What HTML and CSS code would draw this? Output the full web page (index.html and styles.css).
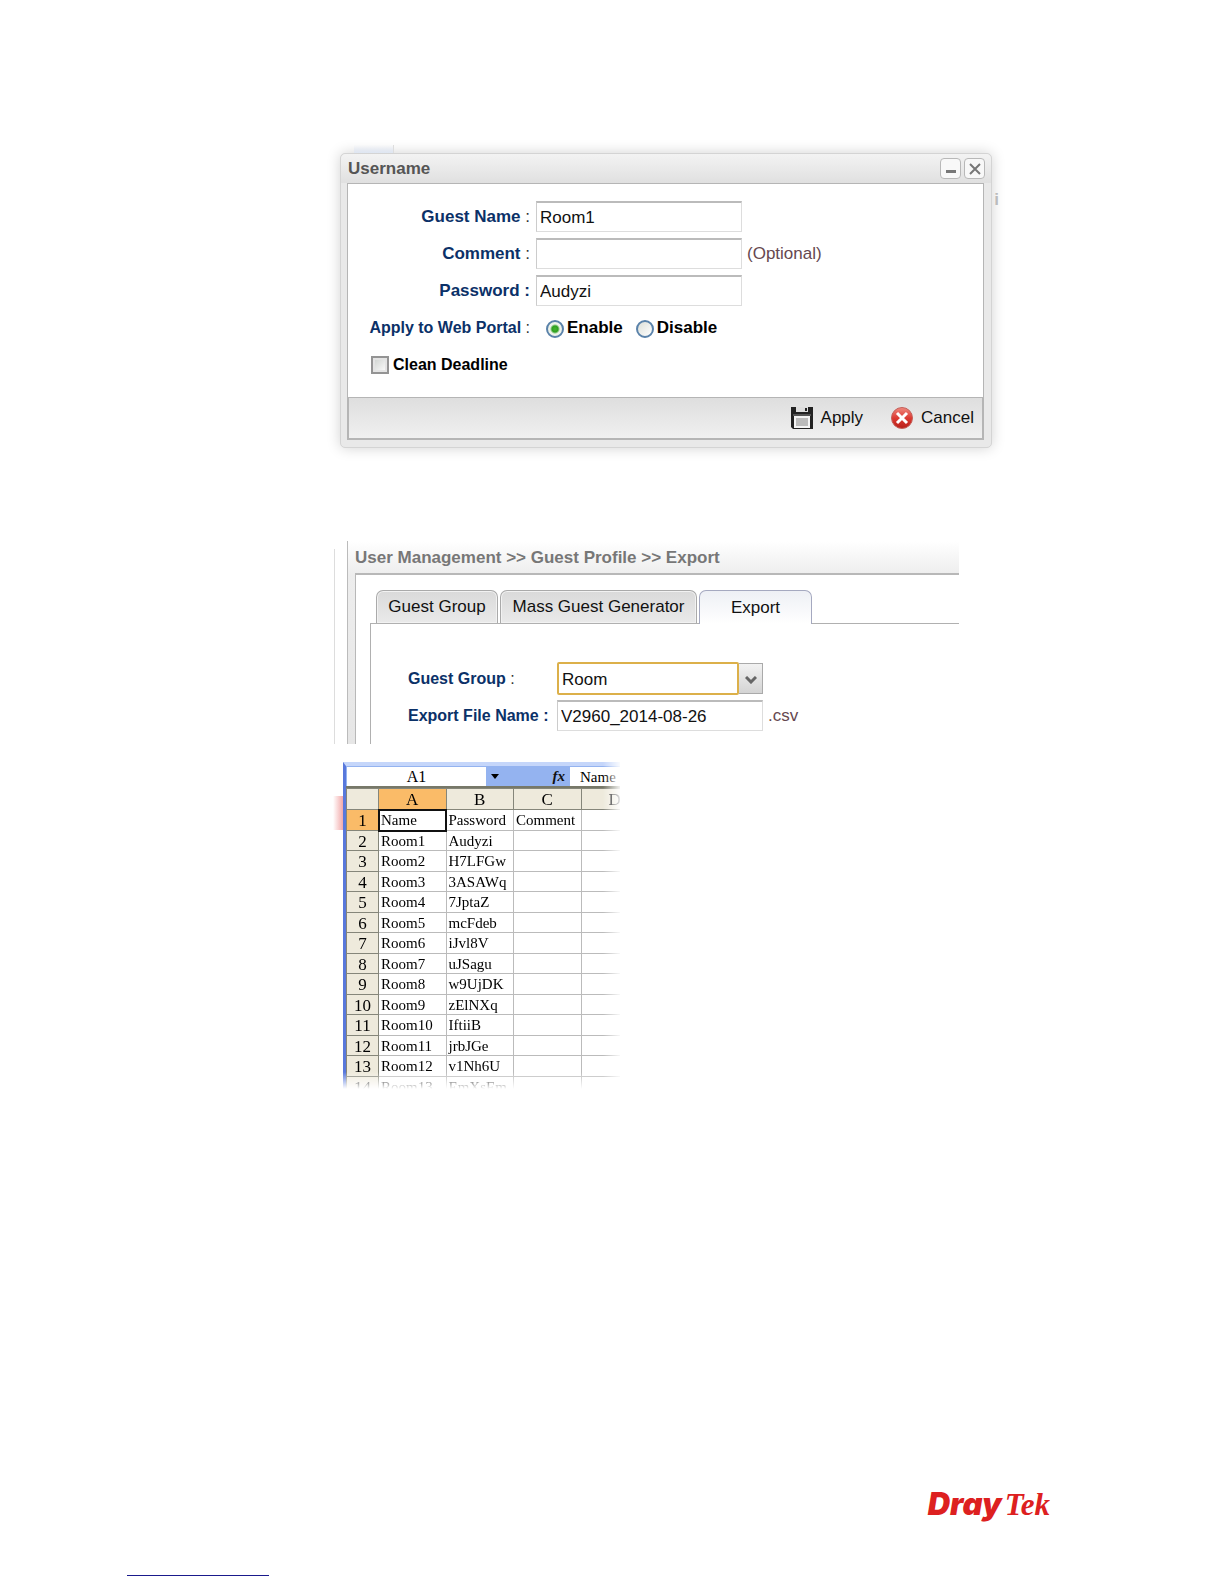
FILE: index.html
```html
<!DOCTYPE html>
<html lang="en">
<head>
  <meta charset="UTF-8" />
  <meta name="viewport" content="width=device-width, initial-scale=1" />
  <title>Guest Profile</title>
  <link rel="stylesheet" href="styles.css">
</head>
<body>
  <main>
    <form class="window">
      <div class="window-title">
        <h1>Username</h1>
        <button type="button" class="tool" aria-label="Minimize">
          <svg width="14" height="14" viewBox="0 0 14 14"><path d="M2 9.500h10" stroke="#777" stroke-width="3"/></svg>
        </button>
        <button type="button" class="tool" aria-label="Close">
          <svg width="14" height="14" viewBox="0 0 14 14"><path d="M2 2l10 10M12 2L2 12" stroke="#777" stroke-width="2"/></svg>
        </button>
      </div>

      <div class="window-body">
        <div class="row">
          <label class="name" for="guest">Guest Name <span>:</span></label>
          <input class="text" type="text" id="guest" value="Room1">
        </div>
        <div class="row">
          <label class="name" for="comment">Comment <span>:</span></label>
          <input class="text" type="text" id="comment">
          <span class="hint">(Optional)</span>
        </div>
        <div class="row">
          <label class="name" for="password">Password :</label>
          <input class="text" type="text" id="password" value="Audyzi">
        </div>
        <div class="row" role="radiogroup" aria-labelledby="portal">
          <span class="name small" id="portal">Apply to Web Portal <span>:</span></span>
          <div class="choices">
            <label class="choice"><input type="radio" name="portal" checked>Enable</label>
            <label class="choice"><input type="radio" name="portal">Disable</label>
          </div>
        </div>
        <div class="row">
          <label class="choice small deadline"><input type="checkbox">Clean Deadline</label>
        </div>
      </div>

      <div class="window-bar">
        <button type="button" class="action">
          <svg width="22" height="22" viewBox="0 0 22 22">
            <path d="M0 0h22v22H2l-2-2z" fill="#222"/>
            <path d="M5 0h12v5H5z" fill="#ddd"/>
            <path d="M14 1h2v3h-2z" fill="#222"/>
            <path d="M2 7h18v2H2z" fill="#555"/>
            <path d="M3 9h16v12H3z" fill="#f4f4f4"/>
            <path d="M5 11h12v8H5z" fill="#bbb"/>
          </svg>
          Apply
        </button>
        <button type="button" class="action">
          <svg width="22" height="22" viewBox="0 0 22 22">
            <defs>
              <linearGradient id="red" x1="0" y1="0" x2="0" y2="1">
                <stop offset="0" stop-color="#f08a80"/>
                <stop offset=".5" stop-color="#dc3a32"/>
                <stop offset="1" stop-color="#b81e18"/>
              </linearGradient>
            </defs>
            <circle cx="11" cy="11" r="10.500" fill="url(#red)" stroke="#c4605a"/>
            <path d="M6 6l10 10M16 6L6 16" stroke="#fff" stroke-width="3"/>
          </svg>
          Cancel
        </button>
      </div>
    </form>

    <section class="export">
      <h2>User Management &gt;&gt; Guest Profile &gt;&gt; Export</h2>
      <div class="export-body">
        <div class="tabs" role="tablist">
          <button type="button" role="tab">Guest Group</button>
          <button type="button" role="tab" class="wide">Mass Guest Generator</button>
          <button type="button" role="tab" aria-selected="true">Export</button>
        </div>
        <div class="panel">
          <div class="row">
            <label class="name small" for="group">Guest Group <span>:</span></label>
            <div class="combo">
              <select id="group"><option>Room</option></select>
              <button type="button" aria-label="Open list">
                <svg width="12" height="8" viewBox="0 0 12 8"><path d="M1 1l5 5 5-5" fill="none" stroke="#666" stroke-width="3"/></svg>
              </button>
            </div>
          </div>
          <div class="row">
            <label class="name small" for="file">Export File Name :</label>
            <input class="text" type="text" id="file" value="V2960_2014-08-26">
            <span class="hint">.csv</span>
          </div>
        </div>
      </div>
    </section>

    <section class="sheet">
      <div class="sheet-view">
        <div class="formula">
          <input class="cell-name" type="text" value="A1" aria-label="Name box">
          <svg width="10" height="5" viewBox="0 0 10 5"><path d="M1 0h8L5 5z" fill="#000"/></svg>
          <i>fx</i>
          <input class="cell-value" type="text" value="Name" aria-label="Formula">
        </div>
        <table>
          <thead>
            <tr><th class="num"></th><th class="on">A</th><th>B</th><th>C</th><th>D</th></tr>
          </thead>
          <tbody>
            <tr><th class="on">1</th><td class="selected">Name</td><td>Password</td><td>Comment</td><td></td></tr>
            <tr><th>2</th><td>Room1</td><td>Audyzi</td><td></td><td></td></tr>
            <tr><th>3</th><td>Room2</td><td>H7LFGw</td><td></td><td></td></tr>
            <tr><th>4</th><td>Room3</td><td>3ASAWq</td><td></td><td></td></tr>
            <tr><th>5</th><td>Room4</td><td>7JptaZ</td><td></td><td></td></tr>
            <tr><th>6</th><td>Room5</td><td>mcFdeb</td><td></td><td></td></tr>
            <tr><th>7</th><td>Room6</td><td>iJvl8V</td><td></td><td></td></tr>
            <tr><th>8</th><td>Room7</td><td>uJSagu</td><td></td><td></td></tr>
            <tr><th>9</th><td>Room8</td><td>w9UjDK</td><td></td><td></td></tr>
            <tr><th>10</th><td>Room9</td><td>zElNXq</td><td></td><td></td></tr>
            <tr><th>11</th><td>Room10</td><td>IftiiB</td><td></td><td></td></tr>
            <tr><th>12</th><td>Room11</td><td>jrbJGe</td><td></td><td></td></tr>
            <tr><th>13</th><td>Room12</td><td>v1Nh6U</td><td></td><td></td></tr>
            <tr><th>14</th><td>Room13</td><td>EmXsEm</td><td></td><td></td></tr>
          </tbody>
        </table>
      </div>
    </section>
  </main>

  <footer>
    <div class="logo"><b>Dray</b><i>Tek</i></div>
    <a href="#" class="rule" aria-label="Home"></a>
  </footer>
</body>
</html>
```
FILE: styles.css
```css
* {
  box-sizing: border-box;
}

body {
  margin: 0;
  min-height: 100vh;
  display: flex;
  flex-direction: column;
  background: #fff;
  font-family: "Liberation Sans", Arial, sans-serif;
  font-size: 17px;
  color: #111;
}

main {
  padding: 153px 24px 0 340px;
}

h1, h2 {
  margin: 0;
  font-size: 17px;
  line-height: 20px;
  color: #555;
}

button {
  font: inherit;
  color: inherit;
  padding: 0;
  margin: 0;
}

/* username window */
.window {
  position: relative;
  max-width: 652px;
  padding: 0 7px 7px 6px;
  background: #e9e9e9;
  border: 1px solid #d4d4d4;
  border-radius: 5px;
  box-shadow: 0 0 14px rgba(0,0,0,0.18);
}

/* blurred remains of the page behind the window */
.window::before {
  content: "";
  position: absolute;
  left: 13px;
  top: -9px;
  width: 39px;
  height: 8px;
  background: linear-gradient(#fff0, #dfe6f2);
  border-right: 1px solid #ddd;
}

.window::after {
  content: "i";
  position: absolute;
  right: -8px;
  top: 36px;
  font-weight: bold;
  color: #bbb;
}

.window-title {
  display: flex;
  align-items: center;
  gap: 3px;
  height: 29px;
  margin: 0 -7px 0 -6px;
  padding: 0 6px 0 7px;
  background: linear-gradient(#f3f3f3, #e0e0e0);
  border-radius: 5px 5px 0 0;
}

.window-title h1 {
  flex: 1;
}

.tool {
  display: flex;
  align-items: center;
  justify-content: center;
  width: 21px;
  height: 21px;
  background: #f8f8f8;
  border: 1px solid #b8b8b8;
  border-radius: 4px;
}

.window-body {
  display: flex;
  flex-direction: column;
  gap: 6px;
  padding: 17px 0;
  background: #fff;
  border: 1px solid #b5b5b5;
  border-bottom: 0;
}

.row {
  display: flex;
  align-items: center;
  height: 31px;
}

.name {
  width: 182px;
  margin-right: 6px;
  text-align: right;
  font-weight: bold;
  color: #0b3168;
  white-space: nowrap;
}

.name span {
  font-weight: normal;
  color: #333;
}

.small {
  font-size: 16px;
}

.text {
  width: 206px;
  height: 31px;
  padding: 2px 3px 0;
  border: 1px solid #ddd;
  border-top: 2px solid #bbb;
  border-left-color: #ccc;
  background: #fff;
  font: inherit;
  color: #111;
}

.hint {
  padding-left: 5px;
  color: #664850;
}

.choices {
  display: flex;
  gap: 13px;
  padding-left: 10px;
}

.choice {
  display: flex;
  align-items: center;
  gap: 3px;
  font-weight: bold;
  color: #000;
}

.choice input {
  appearance: none;
  width: 18px;
  height: 18px;
  margin: 3px 0 0;
}

.choice input[type="radio"] {
  border: 2px solid #5a82aa;
  border-radius: 50%;
  background: linear-gradient(135deg, #dcdfd8, #fff);
}

.choice input[type="radio"]:checked {
  background: radial-gradient(circle, #45b32f 0, #30a020 3px, #eef3ea 5px);
}

.choice input[type="checkbox"] {
  margin: 0;
  border: 2px solid #949494;
  background: linear-gradient(135deg, #ccd0cd, #fff);
  box-shadow: inset 0 0 0 2px #e4e4e4;
}

.deadline {
  padding-left: 23px;
  gap: 4px;
}

.window-bar {
  display: flex;
  align-items: center;
  justify-content: flex-end;
  gap: 28px;
  height: 43px;
  padding: 0 8px;
  background: linear-gradient(#dedede, #f0f0f0);
  border: 2px solid #b5b5b5;
  border-top-width: 1px;
}

.action {
  display: flex;
  align-items: center;
  gap: 8px;
  border: 0;
  background: none;
}

/* export page */
.export {
  position: relative;
  max-width: 612px;
  margin-top: 93px;
  margin-left: 7px;
  padding-left: 7px;
  background: linear-gradient(#fff, #ededed 34px, #e6e6e6);
  border-left: 1px solid #bbb;
}

.export::before {
  content: "";
  position: absolute;
  left: -14px;
  top: 8px;
  bottom: 0;
  width: 1px;
  background: #ddd;
}

.export h2 {
  height: 32px;
  padding-top: 7px;
  color: #777;
  white-space: nowrap;
}

.export-body {
  padding: 15px 0 0 14px;
  background: #fff;
  border-top: 2px solid #b8b8b8;
  border-left: 1px solid #b8b8b8;
}

.tabs {
  display: flex;
  gap: 2px;
  padding-left: 6px;
}

.tabs button {
  flex: 0 1 122px;
  height: 33px;
  background: linear-gradient(#dadada, #eaeaea);
  border: 1px solid #aaa;
  border-bottom: 0;
  border-radius: 7px 7px 0 0;
  box-shadow: inset 0 0 0 1px #f2f2f2;
  white-space: nowrap;
}

.tabs .wide {
  flex-basis: 197px;
}

.tabs button[aria-selected="true"] {
  flex-basis: 113px;
  height: 34px;
  margin-bottom: -1px;
  z-index: 1;
  background: linear-gradient(#eef0f5, #fff);
  border-color: #a5a9c0;
  box-shadow: none;
}

.panel {
  display: flex;
  flex-direction: column;
  gap: 6px;
  height: 121px;
  padding: 39px 0 0 37px;
  border-top: 1px solid #b0b0b0;
  border-left: 1px solid #b0b0b0;
}

.panel .name {
  width: 143px;
  text-align: left;
}

.combo {
  display: flex;
  width: 206px;
}

.combo select {
  appearance: none;
  flex: 1;
  height: 33px;
  padding: 2px 3px 0;
  border: 2px solid #dcb04a;
  border-radius: 2px;
  background: #fff;
  font: inherit;
  color: #111;
}

.combo button {
  width: 24px;
  height: 31px;
  align-self: center;
  background: linear-gradient(#f2f2f2, #d4d4d4);
  border: 1px solid #aaa;
  border-left: 0;
}

/* spreadsheet */
.sheet {
  position: relative;
  max-width: 277px;
  margin: 18px 0 0 3px;
  font-family: "Liberation Serif", "Times New Roman", serif;
  font-size: 15px;
}

.sheet::before {
  content: "";
  position: absolute;
  left: -10px;
  top: 34px;
  width: 10px;
  height: 34px;
  background: linear-gradient(90deg, #fff, #f2a9a9);
}

.sheet-view {
  overflow: hidden;
  border-left: 3px solid #5878dc;
  border-top: 4px solid #c5d6fa;
  mask-image: linear-gradient(90deg, #000 260px, transparent 279px), linear-gradient(#000 310px, transparent 327px);
  mask-composite: intersect;
}

.formula {
  display: flex;
  align-items: center;
  height: 22px;
  padding-left: 1px;
  background: #94b3f0;
  border-bottom: 2px solid #777868;
  font-size: 16px;
}

.formula input {
  height: 19px;
  padding: 2px 0 0;
  border: 0;
  background: #fff;
  font: inherit;
  color: #000;
}

.formula svg {
  margin-left: 4px;
}

.formula i {
  flex: 1;
  padding-right: 5px;
  text-align: right;
  font-size: 15px;
  font-weight: bold;
}

.cell-name {
  width: 139px;
  text-align: center;
}

.formula .cell-value {
  width: 50px;
  padding-left: 10px;
  font-size: 15px;
}

table {
  width: 303px;
  table-layout: fixed;
  border-collapse: collapse;
}

tr {
  height: 21px;
}

tbody tr:nth-child(even) {
  height: 20px;
}

th, td {
  padding: 1px 0 0 2px;
  line-height: 17px;
  border: 1px solid #bbb;
  text-align: left;
  white-space: nowrap;
  color: #000;
}

th {
  padding: 1px 0 0;
  background: #eeeadc;
  border-color: #85867a;
  font-size: 17px;
  font-weight: normal;
  text-align: center;
}

.num {
  width: 32px;
}

.on {
  background: #fabb68;
}

.selected {
  outline: 2px solid #111;
  outline-offset: -1px;
}

/* footer */
footer {
  margin-top: auto;
  padding: 0 174px 8px 127px;
}

.logo {
  display: flex;
  align-items: baseline;
  justify-content: flex-end;
  gap: 3px;
  margin-bottom: 52px;
  font-size: 31px;
  line-height: 36px;
  color: #dd2020;
}

.logo b {
  font-family: Inter, sans-serif;
  font-weight: 900;
  font-style: italic;
}

.logo i {
  font-family: "Liberation Serif", serif;
  font-weight: bold;
}

.rule {
  display: block;
  width: 142px;
  border-bottom: 1px solid #1a1a8c;
}
```
